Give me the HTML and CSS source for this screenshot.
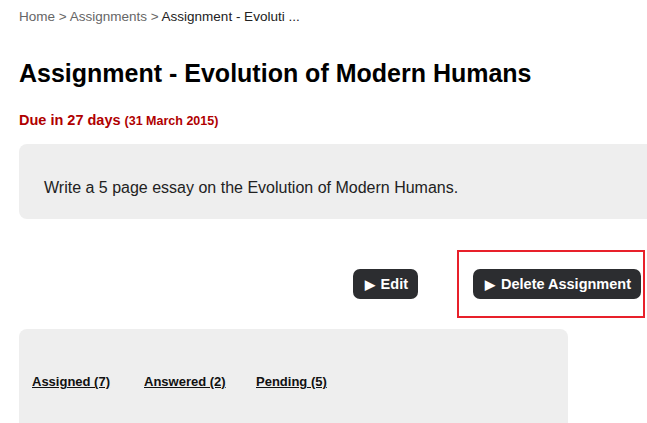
FILE: index.html
```
<!DOCTYPE html>
<html>
<head>
<meta charset="utf-8">
<link rel="stylesheet" href="styles.css">
</head>
<body>
<div class="page">
  <nav class="crumbs"><span class="crumb-link">Home</span> &gt; <span class="crumb-link">Assignments</span> &gt; <span class="crumb-current">Assignment - Evoluti ...</span></nav>
  <h1 class="title">Assignment - Evolution of Modern Humans</h1>
  <p class="due">Due in 27 days <span class="due-date">(31 March 2015)</span></p>
  <div class="desc">Write a 5 page essay on the Evolution of Modern Humans.</div>
  <div class="actions">
    <button class="btn"><span class="arrow">&#9654;</span>Edit</button>
    <div class="highlight">
      <button class="btn"><span class="arrow">&#9654;</span>Delete Assignment</button>
    </div>
  </div>
  <div class="stats">
    <div class="stat"><a class="stat-link" href="#">Assigned (7)</a></div>
    <div class="stat"><a class="stat-link" href="#">Answered (2)</a></div>
    <div class="stat"><a class="stat-link" href="#">Pending (5)</a></div>
  </div>
</div>
</body>
</html>
```
FILE: styles.css
```
html, body {
  margin: 0;
  padding: 0;
  background: #fff;
  overflow: hidden;
}
body {
  font-family: "Liberation Sans", Arial, sans-serif;
  color: #111;
}
.page {
  padding-left: 19px;
  width: 700px;
}
.crumbs {
  padding-top: 9px;
  font-size: 13.5px;
  line-height: 15px;
  color: #666;
}
.crumb-current {
  color: #222;
}
.title {
  margin: 0;
  padding-top: 35px;
  font-size: 25px;
  line-height: 29px;
  font-weight: bold;
  color: #000;
}
.due {
  margin: 0;
  padding-top: 24px;
  font-size: 14.5px;
  line-height: 16px;
  font-weight: bold;
  color: #b00000;
}
.due-date {
  font-size: 12.5px;
}
.desc {
  margin-top: 15px;
  background: #eeeeee;
  border-radius: 8px;
  height: 75px;
  box-sizing: border-box;
  padding: 35px 25px 0;
  font-size: 16px;
  line-height: 18px;
  color: #222;
  width: 680px;
}
.actions {
  display: flex;
  align-items: center;
  justify-content: flex-end;
  width: 626px;
  margin-top: 31px;
  gap: 39px;
}
.highlight {
  border: 2px solid #e8202a;
  padding: 17px 2px 17px 14px;
}
.btn {
  display: flex;
  align-items: center;
  height: 30px;
  border: 0;
  border-radius: 7px;
  background: #2c2d30;
  color: #fff;
  font-family: "Liberation Sans", Arial, sans-serif;
  font-size: 14.5px;
  font-weight: bold;
  padding: 0 10px 0 12px;
}
.arrow {
  font-size: 13px;
  margin-right: 6px;
}
.stats {
  margin-top: 11px;
  width: 549px;
  height: 100px;
  box-sizing: border-box;
  background: #eeeeee;
  border-radius: 8px 8px 0 0;
  padding: 43px 13px 0;
  display: grid;
  grid-template-columns: 112px 112px 112px;
  align-content: start;
}
.stat-link {
  font-size: 13px;
  line-height: 15px;
  font-weight: bold;
  color: #111;
  text-decoration: underline;
}
```
